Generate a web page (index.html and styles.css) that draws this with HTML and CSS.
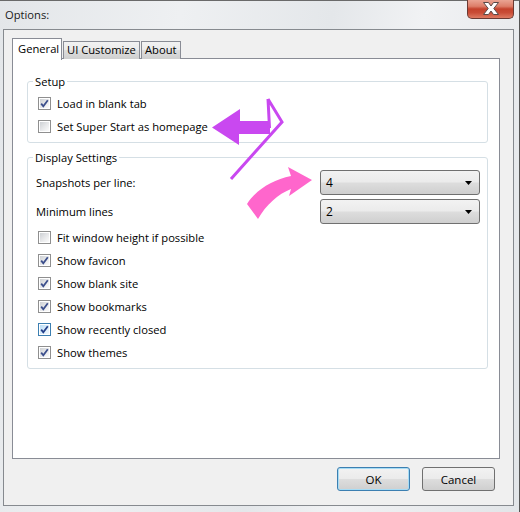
FILE: index.html
```html
<!DOCTYPE html>
<html>
<head>
<meta charset="utf-8">
<link rel="stylesheet" href="styles.css">
</head>
<body>
<div class="window">
  <div class="titlebar">
    <span class="title">Options:</span>
    <span class="close">
      <svg width="47" height="19" viewBox="0 0 47 19"><path d="M16.5 3.5 L21.5 3.5 L24 7 L26.5 3.5 L31.5 3.5 L26.8 9.5 L31.5 15.5 L26.5 15.5 L24 12 L21.5 15.5 L16.5 15.5 L21.2 9.5 Z" fill="#fff" stroke="#5a4a48" stroke-width="1"/></svg>
    </span>
  </div>
  <div class="client">
    <div class="tabs">
      <div class="tab active">General</div>
      <div class="tab">UI Customize</div>
      <div class="tab">About</div>
    </div>
    <div class="panel">
      <fieldset class="group">
        <legend>Setup</legend>
        <div class="row"><span class="cb"><svg width="9" height="9" viewBox="0 0 9 9"><path d="M1.2 4.6 L3.3 7.2 L7.8 1.2" fill="none" stroke="#3c4f8c" stroke-width="1.8"/></svg></span><span>Load in blank tab</span></div>
        <div class="row"><span class="cb"></span><span>Set Super Start as homepage</span></div>
      </fieldset>
      <fieldset class="group display">
        <legend>Display Settings</legend>
        <div class="row select-row"><span>Snapshots per line:</span><div class="combo"><span>4</span><svg width="7" height="4" viewBox="0 0 7 4"><path d="M0 0 H7 L3.5 4 Z" fill="#000"/></svg></div></div>
        <div class="row select-row"><span>Minimum lines</span><div class="combo"><span>2</span><svg width="7" height="4" viewBox="0 0 7 4"><path d="M0 0 H7 L3.5 4 Z" fill="#000"/></svg></div></div>
        <div class="row"><span class="cb"></span><span>Fit window height if possible</span></div>
        <div class="row"><span class="cb"><svg width="9" height="9" viewBox="0 0 9 9"><path d="M1.2 4.6 L3.3 7.2 L7.8 1.2" fill="none" stroke="#3c4f8c" stroke-width="1.8"/></svg></span><span>Show favicon</span></div>
        <div class="row"><span class="cb"><svg width="9" height="9" viewBox="0 0 9 9"><path d="M1.2 4.6 L3.3 7.2 L7.8 1.2" fill="none" stroke="#3c4f8c" stroke-width="1.8"/></svg></span><span>Show blank site</span></div>
        <div class="row"><span class="cb"><svg width="9" height="9" viewBox="0 0 9 9"><path d="M1.2 4.6 L3.3 7.2 L7.8 1.2" fill="none" stroke="#3c4f8c" stroke-width="1.8"/></svg></span><span>Show bookmarks</span></div>
        <div class="row"><span class="cb hover"><svg width="9" height="9" viewBox="0 0 9 9"><path d="M1.2 4.6 L3.3 7.2 L7.8 1.2" fill="none" stroke="#24408a" stroke-width="1.8"/></svg></span><span>Show recently closed</span></div>
        <div class="row"><span class="cb"><svg width="9" height="9" viewBox="0 0 9 9"><path d="M1.2 4.6 L3.3 7.2 L7.8 1.2" fill="none" stroke="#3c4f8c" stroke-width="1.8"/></svg></span><span>Show themes</span></div>
      </fieldset>
    </div>
    <div class="buttons">
      <button class="btn default">OK</button>
      <button class="btn">Cancel</button>
    </div>
  </div>
  <svg class="annot" width="520" height="512" viewBox="0 0 520 512">
    <path d="M212 127.5 L240 109 L240 121 L270 121 L270 134 L239 134 L239 145 Z" fill="#c948f0"/>
    <path d="M268 99 L269.5 128 M268 99 L282 122 L231 179" fill="none" stroke="#c948f0" stroke-width="3" stroke-linejoin="miter"/>
    <path d="M312 180 L288 167 L291 176 C272 180 256 190 247 204 L258 219 C266 205 278 194 291 189 L289 196 Z" fill="#ff66cc"/>
  </svg>
</div>
</body>
</html>
```

FILE: styles.css
```css
* { box-sizing: border-box; }
html, body { margin: 0; padding: 0; }
body {
  width: 520px;
  height: 512px;
  overflow: hidden;
  font-family: "Open Sans", "Noto Sans", sans-serif;
  font-size: 11.2px;
  color: #000;
}
.window {
  position: relative;
  width: 520px;
  height: 512px;
  background: linear-gradient(100deg, #e3e6e9 0%, #eef0f2 30%, #e4e7ea 55%, #f1f2f4 70%, #e2e5e8 100%);
  border-top: 1px solid #6a6a6a;
  border-right: 1px solid #555;
}
.titlebar {
  height: 28px;
  display: flex;
  justify-content: space-between;
  align-items: flex-start;
  padding-left: 5px;
  padding-right: 5px;
}
.title {
  margin-top: 6px;
  color: #1b1b1b;
}
.close {
  display: block;
  width: 47px;
  height: 19px;
  margin-top: -1px;
  border: 1px solid #6b3a33;
  border-top: none;
  border-radius: 0 0 5px 5px;
  background: linear-gradient(#eaa493 0%, #dd7e69 35%, #c4422c 50%, #c94c36 70%, #de7a62 100%);
  overflow: hidden;
}
.close svg { display: block; margin: -1px 0 0 -1px; }
.client {
  margin-left: 3px;
  width: 511px;
  height: 477px;
  border: 1px solid #868a8f;
  background: #f0f0f0;
  padding: 8px 0 0 8px;
}
.tabs {
  display: flex;
  align-items: flex-end;
  height: 21px;
  position: relative;
  z-index: 1;
  margin-bottom: -1px;
}
.tab {
  height: 18px;
  padding: 0 3px;
  border: 1px solid #898c95;
  border-bottom: none;
  background: linear-gradient(#f2f2f2 0%, #ebebeb 45%, #dddddd 50%, #cfcfcf 100%);
  line-height: 16px;
  margin-right: 1px;
  white-space: nowrap;
}
.tab.active {
  height: 22px;
  margin-bottom: -1px;
  background: #fff;
  padding: 0 5px;
  line-height: 20px;
  width: 50px;
}
.tab:nth-child(2) { width: 77px; }
.tab:nth-child(3) { width: 40px; }
.panel {
  width: 488px;
  height: 401px;
  border: 1px solid #898c95;
  background: #fff;
  padding: 15px 0 0 14px;
}
.group {
  margin: 0;
  width: 461px;
  border: 1px solid #d5dfe5;
  border-radius: 3px;
  padding: 3px 7px 4px 8px;
}
.group legend {
  padding: 0 2px;
  margin-left: -3px;
  line-height: 15px;
}
.display { margin-top: 7px; }
.row {
  display: flex;
  align-items: center;
  height: 23px;
  padding-left: 2px;
}
.select-row {
  height: 29px;
  padding-left: 0;
  justify-content: space-between;
}
.cb {
  display: block;
  width: 13px;
  height: 13px;
  border: 1px solid #8f8f8f;
  padding: 1px;
  margin-right: 6px;
  background: linear-gradient(135deg, #cdd0d4 0%, #e6e7e9 50%, #fbfbfb 100%) content-box, #fff;
  flex: none;
}
.cb svg { display: block; }
.cb.hover {
  border-color: #3c7fb1;
  background: linear-gradient(135deg, #b9dcf5 0%, #d9ecfb 50%, #f1f8fe 100%) content-box, #fff;
}
.combo {
  width: 160px;
  height: 25px;
  border: 1px solid #707070;
  border-radius: 3px;
  background: linear-gradient(#f2f2f2 0%, #ebebeb 48%, #dddddd 52%, #cfcfcf 100%);
  display: flex;
  align-items: center;
  justify-content: space-between;
  padding: 0 7px 0 5px;
  font-size: 12px;
}
.buttons {
  display: flex;
  justify-content: flex-end;
  gap: 12px;
  margin-top: 8px;
  padding-right: 18px;
}
.btn {
  width: 73px;
  height: 24px;
  border: 1px solid #707070;
  border-radius: 3px;
  background: linear-gradient(#f2f2f2 0%, #ebebeb 48%, #dddddd 52%, #cfcfcf 100%);
  font-family: inherit;
  font-size: 11.5px;
  color: #000;
  padding: 0;
}
.btn.default {
  border-color: #3c7fb1;
  box-shadow: inset 0 0 0 1px #a6dcf5;
}
.annot {
  position: absolute;
  left: 0;
  top: -1px;
  pointer-events: none;
}
```
